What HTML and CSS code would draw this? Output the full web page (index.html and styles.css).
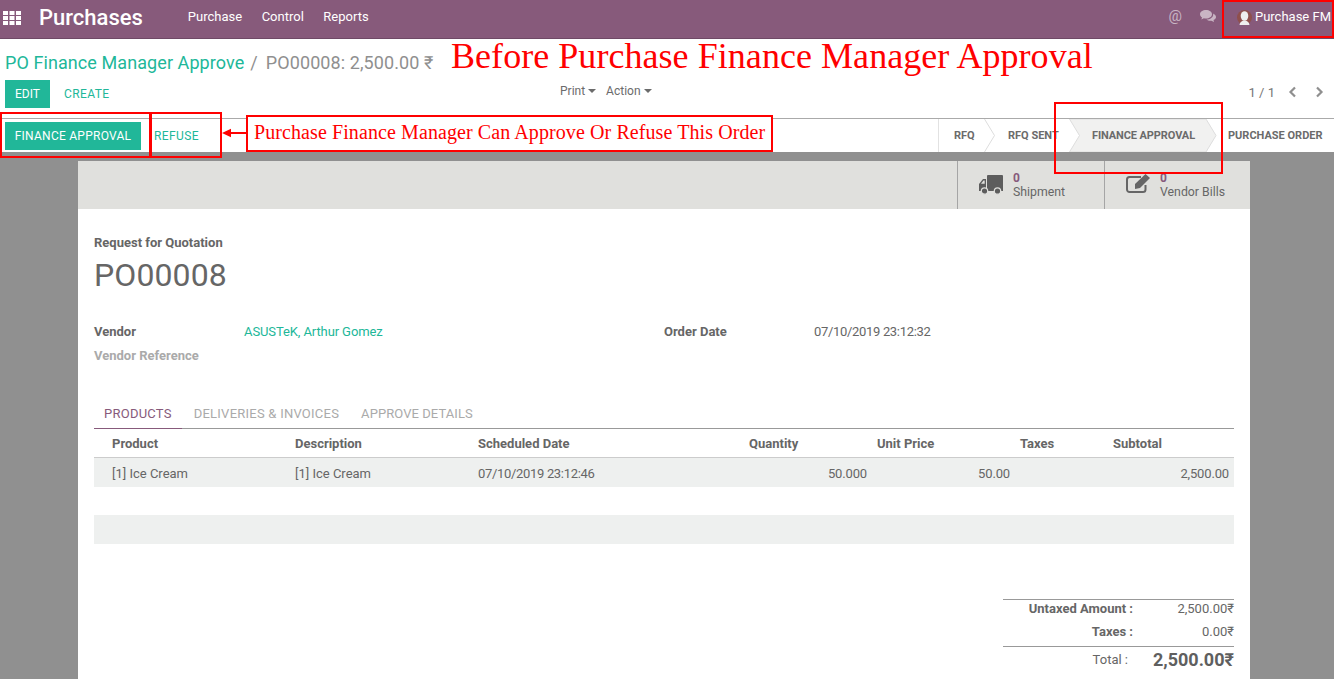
FILE: index.html
```html
<!DOCTYPE html>
<html lang="en">
<head>
  <meta charset="UTF-8">
  <title>PO00008 - Purchases</title>
  <link rel="stylesheet" href="styles.css">
</head>
<body>
  <header class="topbar">
    <svg class="apps" width="18" height="14" viewBox="0 0 18 14" fill="#fff">
      <rect x="0" y="0" width="5" height="4"/><rect x="6.500" y="0" width="5" height="4"/><rect x="13" y="0" width="5" height="4"/>
      <rect x="0" y="5" width="5" height="4"/><rect x="6.500" y="5" width="5" height="4"/><rect x="13" y="5" width="5" height="4"/>
      <rect x="0" y="10" width="5" height="4"/><rect x="6.500" y="10" width="5" height="4"/><rect x="13" y="10" width="5" height="4"/>
    </svg>
    <span class="brand">Purchases</span>
    <nav class="menu">
      <a>Purchase</a>
      <a>Control</a>
      <a>Reports</a>
    </nav>
    <div class="systray">
      <span class="at">@</span>
      <svg class="chat" width="16" height="13" viewBox="0 0 16 13" fill="#c9b5c4">
        <path d="M6 0C2.700 0 0 1.800 0 4.200c0 1.300.8 2.500 2.100 3.300L1.300 9.600l2.600-1.300c.7.2 1.400.2 2.100.2 3.300 0 6-1.900 6-4.300S9.300 0 6 0z"/>
        <path d="M13 3.500c.2.300.2.600.2.900 0 2.900-3 5-6.700 5.100 1 .9 2.300 1.300 3.700 1.300.4 0 .8 0 1.200-.1L14 12l-.5-1.900c1.500-.7 2.500-1.800 2.500-3.200 0-1.400-1.200-2.700-3-3.400z"/>
      </svg>
      <span class="user">
        <svg class="avatar" width="15" height="15" viewBox="0 0 15 15">
          <circle cx="7.500" cy="7.500" r="7.500" fill="#8f4f4c"/>
          <ellipse cx="7.500" cy="6" rx="3.800" ry="4.800" fill="#eee"/>
          <path d="M2.500 15c.3-3 2.500-4.500 5-4.500s4.700 1.500 5 4.500z" fill="#eee"/>
        </svg>
        Purchase FM
      </span>
    </div>
  </header>

  <section class="control">
    <div class="crumbs">
      <a class="crumb-link">PO Finance Manager Approve</a>
      <span class="crumb-sep">/</span>
      <span class="crumb-cur">PO00008: 2,500.00 ₹</span>
    </div>
    <div class="actions">
      <div class="actions-left">
        <button class="btn">EDIT</button>
        <a class="link-btn">CREATE</a>
      </div>
      <div class="actions-mid">
        <span class="drop">Print<i class="caret"></i></span>
        <span class="drop">Action<i class="caret"></i></span>
      </div>
      <div class="pager">
        <span>1 / 1</span>
        <svg width="9" height="12" viewBox="0 0 9 12" fill="none" stroke="#8f8f8f" stroke-width="2.200"><path d="M7 1.500 2.500 6 7 10.500"/></svg>
        <svg width="9" height="12" viewBox="0 0 9 12" fill="none" stroke="#8f8f8f" stroke-width="2.200"><path d="M2 1.500 6.500 6 2 10.500"/></svg>
      </div>
    </div>
    <div class="statusbar">
      <div class="status-left">
        <button class="btn btn-wide">FINANCE APPROVAL</button>
        <a class="link-btn">REFUSE</a>
      </div>
      <div class="steps">
        <span class="step step-first">RFQ
          <svg class="chev" width="11" height="33" viewBox="0 0 11 33" fill="none" stroke="#ddd"><path d="M.5 0l10 16.500L.5 33"/></svg>
        </span>
        <span class="step step-sent">RFQ SENT</span>
        <span class="step step-active">
          <svg class="step-shape" width="148" height="33" viewBox="0 0 148 33" fill="#f1f1f0" stroke="#ddd"><path d="M.5 0h136.500l10 16.500L137 33H.5l10-16.500z"/></svg>
          <span class="step-label">FINANCE APPROVAL</span>
        </span>
        <span class="step step-last">PURCHASE ORDER</span>
      </div>
    </div>
  </section>

  <main class="content">
    <div class="sheet">
      <div class="stat-row">
        <div class="stat stat-ship">
          <svg width="24" height="20" viewBox="0 0 24 20" fill="#5d5d5d">
            <rect x="8" y="0" width="16" height="14" rx="1"/>
            <path d="M7 4H4L0 9v6h7z"/>
            <rect x="0" y="13" width="24" height="3"/>
            <path d="M5.700 5.500H4.500L2 8.800h3.700z" fill="#e0e0dd"/>
            <circle cx="5.500" cy="16" r="3.200" stroke="#e0e0dd" stroke-width="1.200"/>
            <circle cx="18.500" cy="16" r="3.200" stroke="#e0e0dd" stroke-width="1.200"/>
          </svg>
          <div class="stat-text"><b>0</b><span>Shipment</span></div>
        </div>
        <div class="stat stat-bills">
          <svg width="24" height="20" viewBox="0 0 24 20">
            <path d="M15 4H3.500A2.500 2.500 0 0 0 1 6.500v10A2.500 2.500 0 0 0 3.500 19h13.500a2.500 2.500 0 0 0 2.500-2.500V12" fill="none" stroke="#666" stroke-width="2"/>
            <path d="M9 11 19.500 1 24 5 14 15l-5 1z" fill="#666"/>
          </svg>
          <div class="stat-text"><b>0</b><span>Vendor Bills</span></div>
        </div>
      </div>

      <div class="sheet-body">
        <div class="doc-label">Request for Quotation</div>
        <h1 class="doc-name">PO00008</h1>

        <div class="fields">
          <div class="field-col field-col-left">
            <div class="field"><label>Vendor</label><a>ASUSTeK, Arthur Gomez</a></div>
            <div class="field"><label class="muted">Vendor Reference</label></div>
          </div>
          <div class="field-col">
            <div class="field field-date"><label>Order Date</label><span class="stamp">07/10/2019 23:12:32</span></div>
          </div>
        </div>

        <div class="tabs">
          <a class="tab tab-active">PRODUCTS</a>
          <a class="tab">DELIVERIES &amp; INVOICES</a>
          <a class="tab">APPROVE DETAILS</a>
        </div>

        <table class="lines">
          <thead>
            <tr>
              <th class="c-prod">Product</th><th class="c-desc">Description</th><th class="c-date">Scheduled Date</th>
              <th class="c-qty">Quantity</th><th class="c-price">Unit Price</th><th class="c-tax">Taxes</th><th class="c-sub">Subtotal</th>
            </tr>
          </thead>
          <tbody>
            <tr>
              <td>[1] Ice Cream</td><td>[1] Ice Cream</td><td class="stamp">07/10/2019 23:12:46</td>
              <td class="num">50.000</td><td class="num">50.00</td><td></td><td class="num num-last">2,500.00</td>
            </tr>
            <tr class="blank"><td colspan="7"></td></tr>
            <tr class="blank shaded"><td colspan="7"></td></tr>
          </tbody>
        </table>

        <div class="totals">
          <div class="total-row"><b>Untaxed Amount :</b><span>2,500.00₹</span></div>
          <div class="total-row"><b>Taxes :</b><span>0.00₹</span></div>
          <div class="total-row total-grand"><em>Total :</em><strong>2,500.00₹</strong></div>
        </div>
      </div>
    </div>
  </main>

  <!-- red annotations drawn on top of the screenshot -->
  <div class="note note-title">Before Purchase Finance Manager Approval</div>
  <div class="note note-box note-msg">Purchase Finance Manager Can Approve Or Refuse This Order</div>
  <div class="mark mark-user"></div>
  <div class="mark mark-approve"></div>
  <div class="mark mark-refuse"></div>
  <div class="mark mark-step"></div>
  <svg class="arrow" width="26" height="10" viewBox="0 0 26 10"><path d="M0 5 9 .8v3.200h15v2H9v3.200z" fill="#f00"/></svg>
</body>
</html>
```

FILE: styles.css
```css
html, body { margin: 0; height: 679px; overflow: hidden; }
body { position: relative; font-family: Roboto, "Noto Sans", sans-serif; font-size: 13px; color: #666; background: #fff; }
a { color: #21b799; }

.topbar { display: flex; align-items: center; height: 38px; border-bottom: 1px solid #6f4a66; background: #875a7b; color: #fff; }
.apps { margin: -3px 0 0 3px; }
.brand { margin: -3px 0 0 18px; font-size: 22px; font-weight: 500; }
.menu { display: flex; gap: 19.500px; margin: -5px 0 0 45px; }
.menu a { color: #fff; font-size: 13px; }
.systray { display: flex; align-items: center; margin: -6px 0 0 auto; }
.at { font-size: 15px; color: #c9b5c4; }
.chat { margin-left: 18px; }
.user { display: flex; align-items: center; gap: 3px; margin: 0 3px 0 21px; font-size: 13px; }
.avatar { margin-top: 2px; }

.control { height: 113px; background: #fff; }
.crumbs { display: flex; align-items: baseline; height: 41px; padding-left: 5px; font-size: 18px; line-height: 48px; letter-spacing: 0.080px; }
.crumb-link { color: #21b799; }
.crumb-sep { margin: 0 8px 0 6px; color: #8f8f8f; }
.crumb-cur { color: #8f8f8f; }

.actions { position: relative; display: flex; justify-content: space-between; height: 38px; padding-left: 5px; }
.actions-left { display: flex; align-items: flex-start; }
.btn { height: 28px; padding: 0 10px; border: none; background: #21b799; color: #fff; font-family: inherit; font-size: 12px; }
.btn-wide { width: 136px; padding: 0; letter-spacing: 0.250px; }
.link-btn { margin-left: 14px; font-size: 12px; line-height: 28px; letter-spacing: 0.400px; }
.actions-mid { position: absolute; top: 4px; left: 560px; display: flex; gap: 10px; font-size: 12px; color: #6b6b6b; }
.caret { display: inline-block; margin-left: 3px; border: 4px solid transparent; border-top-color: #6b6b6b; border-bottom: 0; vertical-align: 2px; }
.pager { display: flex; align-items: center; gap: 13px; height: 24px; padding-right: 10px; font-size: 13px; color: #777; }
.pager svg + svg { margin-left: 5px; }

.statusbar { display: flex; justify-content: space-between; height: 33px; border-top: 1px solid #aaa; }
.status-left { display: flex; align-items: flex-start; padding: 3px 0 0 5px; }
.status-left .link-btn { margin-left: 13px; line-height: 29px; }
.steps { display: flex; height: 33px; border-left: 1px solid #e2e2e2; font-size: 11px; font-weight: 700; color: #6b6b6b; }
.step { position: relative; display: flex; align-items: center; box-sizing: border-box; height: 33px; }
.step-first { width: 46px; padding-left: 15px; }
.chev { position: absolute; top: 0; right: -10px; }
.step-sent { width: 84px; padding-left: 23px; }
.step-active { width: 147px; padding-left: 23px; }
.step-shape { position: absolute; top: 0; left: 0; }
.step-label { position: relative; letter-spacing: -0.100px; }
.step-last { width: 118px; padding-left: 12px; }

.content { height: 527px; padding: 9px 84px 0 78px; background: #909090; }
.sheet { height: 100%; background: #fff; overflow: hidden; }
.stat-row { display: flex; justify-content: flex-end; height: 48px; background: #e0e0dd; }
.stat { display: flex; box-sizing: border-box; width: 147px; height: 48px; padding: 14px 0 0 21px; gap: 10px; border-left: 1px solid #a5a5a5; font-size: 12.300px; }
.stat-bills { width: 146px; padding-top: 12px; }
.stat-text { display: flex; flex-direction: column; line-height: 14px; }
.stat-ship .stat-text { margin-top: -4px; }
.stat-bills .stat-text { margin-top: -2px; }
.stat-text b { color: #875a7b; font-size: 12px; }
.stat-text span { color: #666; }

.sheet-body { padding: 27px 16px 0; }
.doc-label { font-size: 13px; font-weight: 700; line-height: 14px; color: #666; }
.doc-name { margin: 5px 0 0; font-size: 32px; font-weight: 400; line-height: 40px; letter-spacing: 0.100px; color: #666; }

.fields { display: flex; margin-top: 24px; height: 73px; font-size: 13px; }
.field-col-left { width: 570px; }
.field { display: flex; height: 24px; align-items: center; }
.field label { width: 150px; font-weight: 700; color: #666; }
.field label.muted { color: #aaa; }
.field a { color: #21b799; letter-spacing: -0.100px; }
.field span { color: #666; }
.stamp { letter-spacing: -0.320px; }

.tabs { display: flex; gap: 2px; height: 33px; margin-top: 3px; border-bottom: 1px solid #999; font-size: 13px; line-height: 38px; letter-spacing: 0.240px; }
.tab { height: 33px; padding: 0 10px; color: #aaa; }
.tab:last-child { letter-spacing: 0.070px; }
.tab-active { border-bottom: 1px solid #875a7b; color: #875a7b; }

.lines { width: 1140px; border-collapse: collapse; table-layout: fixed; font-size: 13px; }
.lines th { height: 28px; padding: 0; border-bottom: 1px solid #ccc; text-align: left; font-weight: 700; color: #666; }
.lines td { height: 29px; padding: 2px 0 0; box-sizing: border-box; color: #666; }
.lines tbody tr:first-child { background: #eef0ef; }
.lines th.c-prod, .lines td:first-child { padding-left: 18px; }
.c-prod { width: 201px; box-sizing: border-box; }
.c-desc { width: 183px; }
.c-date { width: 271px; }
.c-qty { width: 128px; }
.c-price { width: 143px; }
.c-tax { width: 93px; }
.lines td.num { padding-right: 10px; text-align: right; letter-spacing: -0.150px; }
.lines td.num-last { padding-right: 5px; }
.lines .blank td { height: 28px; }
.lines .shaded td { height: 29px; }
.shaded { background: #eef0ef; }

.totals { width: 231px; margin: 55px 0 0 auto; font-size: 13px; border-top: 1px solid #999; }
.total-row { display: flex; box-sizing: border-box; height: 23px; padding-bottom: 6px; align-items: center; color: #666; }
.total-row b { width: 130px; text-align: right; font-weight: 700; color: #666; }
.total-row span { flex: 1; text-align: right; }
.total-grand { height: 26px; padding-bottom: 0; border-top: 1px solid #999; }
.total-grand em { width: 125px; text-align: right; font-style: normal; color: #666; }
.total-grand strong { flex: 1; text-align: right; font-size: 18px; font-weight: 700; color: #5f5f5f; }

.note { position: absolute; font-family: "Liberation Serif", serif; color: #f00; white-space: nowrap; }
.note-title { top: 35px; left: 451px; font-size: 36px; line-height: 42px; letter-spacing: 0.050px; }
.note-box { top: 115px; left: 246px; box-sizing: border-box; width: 527px; height: 37px; border: 2px solid #f00; padding-left: 6px; background: #fff; font-size: 20px; line-height: 30px; letter-spacing: 0.090px; }
.mark { position: absolute; box-sizing: border-box; border: 2px solid #f00; }
.mark-user { top: 0; left: 1222px; width: 112px; height: 38px; }
.mark-approve { top: 112px; left: 0; width: 151px; height: 46px; }
.mark-refuse { top: 112px; left: 150px; width: 72px; height: 46px; }
.mark-step { top: 102px; left: 1054px; width: 169px; height: 72px; }
.arrow { position: absolute; top: 128px; left: 222px; }
```
